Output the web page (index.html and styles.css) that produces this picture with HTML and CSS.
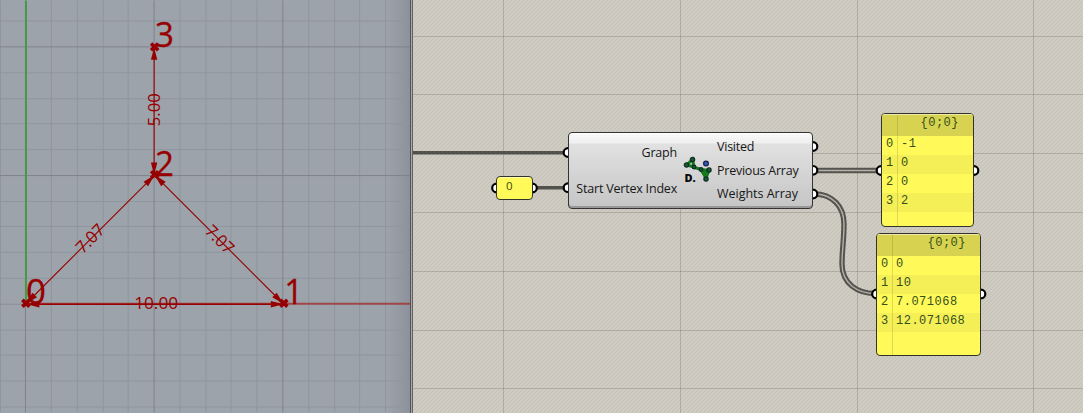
FILE: index.html
```
<!DOCTYPE html>
<html lang="en">
<head>
<meta charset="utf-8">
<title>Shortest path graph</title>
<link rel="stylesheet" href="styles.css">
</head>
<body>
<main class="app">
  <section class="viewport">
    <svg class="scene" width="411" height="413" viewBox="0 0 411 413">
      <path class="minor" d="M.5 0V413M51.5 0V413M77.5 0V413M103.5 0V413M128.5 0V413M180.5 0V413M206.5 0V413M231.5 0V413M257.5 0V413M309.5 0V413M335.5 0V413M360.5 0V413M386.5 0V413M0 20.5H411M0 72.5H411M0 98.5H411M0 123.5H411M0 149.5H411M0 201.5H411M0 226.5H411M0 252.5H411M0 278.5H411M0 330.5H411M0 355.5H411M0 381.5H411M0 407.5H411"/>
      <path class="major" d="M25.5 304V413M154.5 0V413M283.5 0V413M0 46.5H411M0 175.5H411"/>
      <path class="major soft" d="M0 304.5H25"/>
      <path class="axis-y" d="M26 0V304"/>
      <path class="axis-x" d="M26 304H411"/>
      <g class="edges">
        <path class="strong" d="M27 304.5H284"/>
        <path d="M154.5 47V175M155 175L26 304M155 175L284 304"/>
      </g>
      <defs>
        <path id="arrow" d="M0 0L12.5 -3.2V3.2Z"/>
        <path id="cross" d="M-3.6 -3.4L3.6 3.4M-3.6 3.4L3.6 -3.4"/>
      </defs>
      <g class="heads">
        <use href="#arrow" transform="translate(27 304.5)"/>
        <use href="#arrow" transform="translate(284 304.5) rotate(180)"/>
        <use href="#arrow" transform="translate(154.5 47) rotate(90)"/>
        <use href="#arrow" transform="translate(154.5 175) rotate(-90)"/>
        <use href="#arrow" transform="translate(155 175) rotate(135)"/>
        <use href="#arrow" transform="translate(155 175) rotate(45)"/>
        <use href="#arrow" transform="translate(26 304) rotate(-45)"/>
        <use href="#arrow" transform="translate(284 304) rotate(-135)"/>
      </g>
      <g class="points">
        <use href="#cross" x="26" y="303.5"/>
        <use href="#cross" x="284.5" y="303.5"/>
        <use href="#cross" x="155" y="174.5"/>
        <use href="#cross" x="155" y="46.5"/>
      </g>
      <g class="vertex-labels">
        <text x="26" y="304.5" textLength="20" lengthAdjust="spacingAndGlyphs">0</text>
        <text x="285" y="304.5" textLength="19" lengthAdjust="spacingAndGlyphs">1</text>
        <text x="155.5" y="175.5" textLength="19" lengthAdjust="spacingAndGlyphs">2</text>
        <text x="155.5" y="46.5" textLength="19" lengthAdjust="spacingAndGlyphs">3</text>
      </g>
      <g class="dims">
        <text x="134.5" y="309.5" textLength="44" lengthAdjust="spacingAndGlyphs">10.00</text>
        <text transform="translate(160.5 126) rotate(-90)" textLength="33" lengthAdjust="spacingAndGlyphs">5.00</text>
        <text transform="translate(83 254.5) rotate(-45)" textLength="33" lengthAdjust="spacingAndGlyphs">7.07</text>
        <text transform="translate(204.5 232) rotate(45)" textLength="33" lengthAdjust="spacingAndGlyphs">7.07</text>
      </g>
    </svg>
  </section>
  <section class="canvas">
    <svg class="wires" width="670" height="413" viewBox="413 0 670 413">
      <defs>
        <pattern id="hatch" width="4" height="4" patternUnits="userSpaceOnUse">
          <rect width="4" height="4" fill="#d3cfc6"/>
          <path d="M-1 1L1 -1M0 4L4 0M3 5L5 3" stroke="#c5c2b8" stroke-width="1.3"/>
        </pattern>
      </defs>
      <rect x="413" width="670" height="413" fill="url(#hatch)"/>
      <path class="grid" d="M413 36.5H1083M413 94.5H1083M413 153.5H1083M413 212.5H1083M413 271.5H1083M413 330.5H1083M413 388.5H1083M503.5 0V413M680.5 0V413M857.5 0V413M1033.5 0V413"/>
      <path class="wire" d="M413 152.7H567M534 187.7H567"/>
      <g class="double">
        <path d="M814 170.5H880M814 194C832 194 844 206 844 224C844 240 842 250 842 264C842 284 858 293.5 875 293.5"/>
        <path class="inner" d="M814 170.5H880M814 194C832 194 844 206 844 224C844 240 842 250 842 264C842 284 858 293.5 875 293.5"/>
      </g>
      <g class="grips">
        <circle cx="568" cy="152.5" r="4.3"/><circle cx="568" cy="187.7" r="4.3"/>
        <circle cx="813" cy="146.5" r="4.3"/><circle cx="813" cy="170.3" r="4.3"/><circle cx="813" cy="194" r="4.3"/>
        <circle cx="496.5" cy="188" r="4.3"/><circle cx="532.5" cy="188" r="4.3"/>
        <circle cx="881" cy="170.5" r="4.3"/><circle cx="974" cy="170.5" r="4.3"/>
        <circle cx="876.5" cy="294" r="4.3"/><circle cx="981" cy="294" r="4.3"/>
      </g>
    </svg>
    <div class="node value">0</div>
    <div class="node component">
      <div class="inputs"><span>Graph</span><span>Start Vertex Index</span></div>
      <svg class="icon" width="30" height="30" viewBox="0 0 30 30">
        <path d="M4.500 10L10.500 4.500L12 12Z" fill="#c9d4c9" stroke="#147b1c" stroke-width="3"/>
        <path d="M11 12L24 16M19 14.500L27 15.500L24 23Z" fill="#147b1c" stroke="#147b1c" stroke-width="3"/>
        <g fill="#176022" stroke="#122b2d" stroke-width="1.3">
          <circle cx="10.5" cy="4.5" r="2.1"/><circle cx="4.500" cy="10" r="2.1"/><circle cx="12" cy="12" r="1.8"/><circle cx="19" cy="14.5" r="1.8"/><circle cx="27" cy="15" r="2.1"/><circle cx="24" cy="24" r="2.1"/>
        </g>
        <circle cx="24" cy="8.500" r="2.4" fill="#3459bb" stroke="#16234c" stroke-width="1.3"/>
        <text class="icon-letter" x="2.5" y="27">D.</text>
      </svg>
      <div class="outputs"><span>Visited</span><span>Previous Array</span><span class="wide">Weights Array</span></div>
    </div>
    <div class="node panel first">
      <div class="path">{0;0}</div>
      <div class="row"><b>0</b><span>-1</span></div>
      <div class="row"><b>1</b><span>0</span></div>
      <div class="row"><b>2</b><span>0</span></div>
      <div class="row"><b>3</b><span>2</span></div>
    </div>
    <div class="node panel second">
      <div class="path">{0;0}</div>
      <div class="row"><b>0</b><span>0</span></div>
      <div class="row"><b>1</b><span>10</span></div>
      <div class="row"><b>2</b><span>7.071068</span></div>
      <div class="row"><b>3</b><span>12.071068</span></div>
    </div>
  </section>
</main>
</body>
</html>
```
FILE: styles.css
```
* { box-sizing: border-box; }
body { margin: 0; overflow: hidden; }
svg { display: block; }
.app { display: grid; grid-template-columns: 413px 670px; width: 1083px; height: 413px; }
.viewport { background: linear-gradient(90deg, #a9a9a7 412px, #626260 412px); }
.scene { background: linear-gradient(90deg, #9da3ab 386px, #8d919b 410px); border-right: 1px solid #50535a; }
.minor { stroke: #90969d; fill: none; }
.major { stroke: #7f838b; fill: none; }
.soft { stroke: #8b8e94; }
.axis-y { stroke: #449846; stroke-width: 2; }
.axis-x { stroke: #a04648; stroke-width: 2; }
.edges { stroke: #970000; stroke-width: 1.1; fill: none; }
.strong { stroke-width: 1.3; }
.heads, .vertex-labels, .dims { fill: #970000; }
.points { stroke: #970000; stroke-width: 3.6; }
.vertex-labels { font: 35px "Open Sans", sans-serif; stroke: #970000; stroke-width: .3; }
.dims { font: 17px "Open Sans", sans-serif; }

.canvas { position: relative; font-family: "Open Sans", sans-serif; }
.grid { stroke: #605e58; stroke-opacity: .27; }
.wire { stroke: #52514b; stroke-width: 3.5; }
.double { fill: none; stroke: #55534e; stroke-width: 5.4; }
.inner { stroke: #b3b0a8; stroke-width: 1.4; }
.grips { fill: #fff; stroke: #000; stroke-width: 2.2; }

.node { position: absolute; border: 1.5px solid #33332b; border-radius: 4px; overflow: hidden; }
.value {
  left: 83px; top: 176px; width: 37px; height: 24px; padding: 1px 0 0 9px;
  background: #fffa5a; box-shadow: inset 0 1px #ffffb0;
  font: 11.5px/15px "Open Sans", sans-serif; color: #3c4412;
}
.component {
  left: 155px; top: 132px; width: 245px; height: 77px; border-color: #333;
  display: grid; grid-template-columns: 108px 30px 1fr; column-gap: 5px;
  background: linear-gradient(#fafafa 0, #efefef 10px, #e1e1e1 11px, #c5c5c5 100%);
  box-shadow: inset 0 1px #fff, inset 0 -2px #999;
  font-size: 12.5px; color: #171717;
}
.component span { line-height: 20px; white-space: nowrap; }
.inputs { display: flex; flex-direction: column; align-items: flex-end; gap: 15.5px; padding-top: 10px; letter-spacing: -.2px; }
.icon { margin-top: 22px; }
.icon-letter { font: 800 11px "Open Sans", sans-serif; fill: #080808; }
.outputs { display: flex; flex-direction: column; gap: 3.5px; padding-top: 4px; letter-spacing: -.24px; }
.wide { letter-spacing: -.02px; }
.panel { background: #fffa5a; color: #35501a; font: 12px/19px "Liberation Mono", monospace; letter-spacing: .5px; box-shadow: inset 0 1px #f5f3b0; }
.first { left: 468px; top: 113px; width: 93px; height: 114px; }
.second { left: 463px; top: 233px; width: 105px; height: 122.5px; }
.panel::after { content: ""; position: absolute; left: 15px; top: 1px; bottom: 0; width: 1px; background: rgba(80, 80, 20, .18); }
.path { height: 22px; background: #d7d350; text-align: right; padding-right: 14px; line-height: 19px; box-shadow: inset 0 1px #eeeaaa; }
.row { display: grid; grid-template-columns: 15px 1fr; height: 19px; padding-left: 4px; line-height: 17px; }
.row b { font-weight: normal; }
.row:nth-child(odd) { background: #f4ef57; }
```
